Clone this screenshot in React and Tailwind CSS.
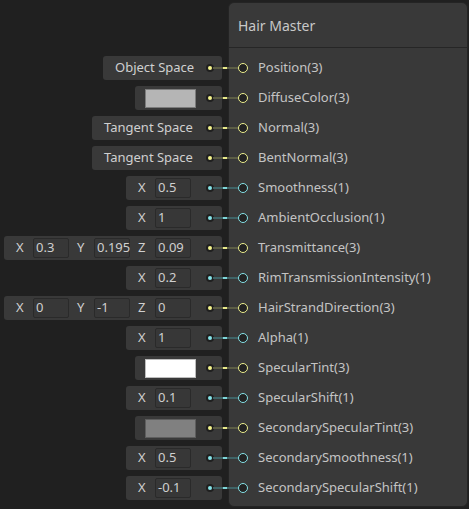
const YEL = { dot: "bg-[#f4f48c]", ring: "border-[#eef08e]", wire: "bg-[#5c5d45]", hi: "bg-[#e9ea8a]" };
const CYA = { dot: "bg-[#86e3e8]", ring: "border-[#86e3e8]", wire: "bg-[#3f6366]", hi: "bg-[#7fd6da]" };

const rows = [
  { label: "Position(3)", c: YEL, kind: "text", text: "Object Space", w: "w-[119px]" },
  { label: "DiffuseColor(3)", c: YEL, kind: "color", swatch: "bg-[#b5b5b5] border-[#7c7c7c]" },
  { label: "Normal(3)", c: YEL, kind: "text", text: "Tangent Space", w: "w-[130px]" },
  { label: "BentNormal(3)", c: YEL, kind: "text", text: "Tangent Space", w: "w-[130px]" },
  { label: "Smoothness(1)", c: CYA, kind: "vec", vals: ["0.5"] },
  { label: "AmbientOcclusion(1)", c: CYA, kind: "vec", vals: ["1"] },
  { label: "Transmittance(3)", c: YEL, kind: "vec", vals: ["0.3", "0.195", "0.09"] },
  { label: "RimTransmissionIntensity(1)", c: CYA, kind: "vec", vals: ["0.2"] },
  { label: "HairStrandDirection(3)", c: YEL, kind: "vec", vals: ["0", "-1", "0"] },
  { label: "Alpha(1)", c: CYA, kind: "vec", vals: ["1"] },
  { label: "SpecularTint(3)", c: YEL, kind: "color", swatch: "bg-[#ffffff] border-[#bdbdbd]" },
  { label: "SpecularShift(1)", c: CYA, kind: "vec", vals: ["0.1"] },
  { label: "SecondarySpecularTint(3)", c: YEL, kind: "color", swatch: "bg-[#808080] border-[#5e5e5e]" },
  { label: "SecondarySmoothness(1)", c: CYA, kind: "vec", vals: ["0.5"] },
  { label: "SecondarySpecularShift(1)", c: CYA, kind: "vec", vals: ["-0.1"] },
];

const axes = ["X", "Y", "Z"];

function Dot({ c }) {
  return (
    <div className="w-[8px] h-[8px] rounded-full bg-[#1f1f1f] flex items-center justify-center shrink-0">
      <div className={`w-[4px] h-[4px] rounded-full ${c.dot}`} />
    </div>
  );
}

function InputBox({ r }) {
  if (r.kind === "text") {
    return (
      <div className={`h-[24px] ${r.w} rounded-[3px] bg-[#393939] flex items-center pl-[12px] pr-[8px]`}>
        <span className="flex-1 text-[13px] text-[#d0d0d0] whitespace-nowrap">{r.text}</span>
        <Dot c={r.c} />
      </div>
    );
  }
  if (r.kind === "color") {
    return (
      <div className="h-[24px] rounded-[3px] bg-[#393939] flex items-center pl-[10px] pr-[8px]">
        <div className={`w-[51px] h-[19px] border ${r.swatch}`} />
        <div className="ml-[10px]"><Dot c={r.c} /></div>
      </div>
    );
  }
  return (
    <div className="h-[24px] rounded-[3px] bg-[#393939] flex items-center pl-[12px] pr-[8px]">
      <div className="flex items-center gap-[8px]">
        {r.vals.map((v, i) => (
          <div key={i} className="flex items-center">
            <span className="w-[17px] text-[13px] text-[#d0d0d0]">{axes[i]}</span>
            <div className="w-[36px] h-[20px] bg-[#373737] border border-[#2a2a2a] rounded-[2px] flex items-center pl-[2px] text-[13px] text-[#cfcfcf]">
              {v}
            </div>
          </div>
        ))}
      </div>
      <div className="ml-[15px]"><Dot c={r.c} /></div>
    </div>
  );
}

export default function App() {
  return (
    <div className="w-[469px] h-[509px] bg-[#202020] flex overflow-hidden" style={{ fontFamily: '"Segoe UI", "Noto Sans", "Open Sans", sans-serif' }}>
      <div className="w-[228px] shrink-0 pt-[56px] pr-[6px] flex flex-col items-end gap-[6px]">
        {rows.map((r, i) => (
          <InputBox key={i} r={r} />
        ))}
      </div>

      <div className="mt-[2px] w-[240px] h-[505px] rounded-[6px] bg-[#393939] border border-[#242424] flex flex-col">
        <div className="h-[45px] shrink-0 border-b border-[#262626] flex items-center pl-[9px] text-[14px] text-[#c8c8c8]">
          Hair Master
        </div>
        <div className="pt-[5px] flex flex-col">
          {rows.map((r, i) => (
            <div key={i} className="relative h-[30px] flex items-center">
              <div className={`absolute left-[-16px] top-[14px] w-[26px] h-[2px] ${r.c.wire}`}>
                <div className={`absolute left-[10px] top-0 w-[4px] h-[2px] ${r.c.hi}`} />
              </div>
              <div className={`relative ml-[9px] w-[10px] h-[10px] rounded-full border-[1.5px] bg-[#222222] ${r.c.ring}`} />
              <span className="ml-[10px] text-[13px] text-[#c4c4c4] whitespace-nowrap">{r.label}</span>
            </div>
          ))}
        </div>
      </div>
    </div>
  );
}
